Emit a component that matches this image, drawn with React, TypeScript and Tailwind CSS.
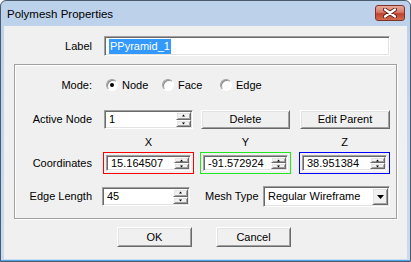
const sunken =
  "border border-t-[#a0a0a0] border-l-[#a0a0a0] border-r-white border-b-white shadow-[inset_1px_1px_0_#696969,inset_-1px_-1px_0_#e3e3e3] bg-white";
const raised =
  "border border-t-white border-l-white border-r-[#696969] border-b-[#696969] shadow-[inset_1px_1px_0_#e3e3e3,inset_-1px_-1px_0_#a0a0a0] bg-[#f0f0f0]";

function Arrow({ up }: { up?: boolean }) {
  return (
    <svg width="5" height="3" viewBox="0 0 5 3">
      <polygon points={up ? "2.5,0.5 4,2.5 1,2.5" : "1,0.5 4,0.5 2.5,2.5"} fill="#000" />
    </svg>
  );
}

function SpinBox({ value, className }: { value: string; className: string }) {
  return (
    <div className={`flex items-center ${sunken} ${className}`}>
      <span className="flex-1 pl-[4px] leading-none">{value}</span>
      <div className="flex flex-col self-stretch py-[1px] pr-[1px]">
        <div className={`flex-1 w-[15px] flex items-center justify-center ${raised}`}>
          <Arrow up />
        </div>
        <div className={`flex-1 w-[15px] flex items-center justify-center ${raised}`}>
          <Arrow />
        </div>
      </div>
    </div>
  );
}

function Radio({ checked, label, className }: { checked?: boolean; label: string; className: string }) {
  return (
    <div className={`flex items-center ${className}`}>
      <div className="w-[12px] h-[12px] rounded-full border border-t-[#a0a0a0] border-l-[#a0a0a0] border-r-white border-b-white bg-white flex items-center justify-center shadow-[inset_1px_1px_0_#8a8a8a]">
        {checked && <div className="w-[4px] h-[4px] rounded-full bg-black" />}
      </div>
      <span className="ml-[4px]">{label}</span>
    </div>
  );
}

function Button({ label, className }: { label: string; className: string }) {
  return (
    <div className={`flex items-center justify-center ${raised} ${className}`}>
      {label}
    </div>
  );
}

function CoordBox({ value, color }: { value: string; color: string }) {
  return (
    <div className={`w-[91px] h-[22px] border p-[2px] ${color}`}>
      <SpinBox value={value} className="w-full h-full" />
    </div>
  );
}

export default function App() {
  return (
    <div className="w-[411px] h-[262px] flex flex-col border border-[#4b5b6e] rounded-t-[6px] bg-[linear-gradient(to_bottom,#bcd1ea,#c8dbf0)] shadow-[inset_0_-1px_0_#4fa8e6] font-['Liberation_Sans',Arial,sans-serif] text-[11px] text-black overflow-hidden">
      {/* title bar */}
      <div className="h-[25px] flex justify-between">
        <div className="pl-[6px] pt-[6px] text-[11.5px] leading-[14px]">Polymesh Properties</div>
        <div className="mt-[4px] mr-[5px] w-[30px] h-[16px] rounded-[3px] border border-[#7d3328] bg-[linear-gradient(to_bottom,#e9a999,#d8796a_45%,#c2412f_55%,#cf6a4e)] flex items-center justify-center">
          <svg width="14" height="10" viewBox="0 0 14 10">
            <path d="M2 1.5 L12 8.5 M12 1.5 L2 8.5" stroke="#5b1e16" strokeWidth="4" strokeLinecap="round" />
            <path d="M2 1.5 L12 8.5 M12 1.5 L2 8.5" stroke="#ffffff" strokeWidth="2.2" strokeLinecap="round" />
          </svg>
        </div>
      </div>

      {/* client area */}
      <div className="flex-1 mx-[3px] mb-[2px] bg-[#f0f0f0] flex flex-col">
        <div className="mt-[10px] flex items-center h-[20px]">
          <div className="w-[88px] text-right">Label</div>
          <div className={`ml-[12px] w-[286px] h-[20px] flex items-center pl-[4px] ${sunken}`}>
            <span className="bg-[#3399ff] text-white px-[1px] leading-[15px]">PPyramid_1</span>
          </div>
        </div>

        <div className="mt-[8px] ml-[10px] w-[383px] h-[155px] border border-[#a0a0a0] shadow-[1px_1px_0_#ffffff,inset_1px_1px_0_#ffffff] flex flex-col">
          <div className="mt-[12px] h-[16px] flex items-center">
            <div className="w-[77px] text-right">Mode:</div>
            <Radio checked label="Node" className="ml-[14px] w-[56px]" />
            <Radio label="Face" className="w-[58px]" />
            <Radio label="Edge" className="w-[60px]" />
          </div>

          <div className="mt-[17px] h-[19px] flex items-center">
            <div className="w-[77px] text-right">Active Node</div>
            <SpinBox value="1" className="ml-[12px] w-[89px] h-[19px]" />
            <Button label="Delete" className="ml-[8px] w-[89px] h-[19px]" />
            <Button label="Edit Parent" className="ml-[10px] w-[90px] h-[19px]" />
          </div>

          <div className="mt-[7px] h-[13px] flex items-center">
            <div className="w-[88px]" />
            <div className="w-[91px] text-center">X</div>
            <div className="ml-[6px] w-[91px] text-center">Y</div>
            <div className="ml-[8px] w-[91px] text-center">Z</div>
          </div>

          <div className="mt-[3px] h-[22px] flex items-center">
            <div className="w-[77px] text-right">Coordinates</div>
            <div className="ml-[11px]">
              <CoordBox value="15.164507" color="border-[#ff0000]" />
            </div>
            <div className="ml-[6px]">
              <CoordBox value="-91.572924" color="border-[#22e622]" />
            </div>
            <div className="ml-[8px]">
              <CoordBox value="38.951384" color="border-[#0000ff]" />
            </div>
          </div>

          <div className="mt-[12px] h-[21px] flex items-center">
            <div className="w-[77px] text-right">Edge Length</div>
            <SpinBox value="45" className="ml-[10px] w-[88px] h-[19px]" />
            <div className="ml-[15px] w-[58px]">Mesh Type</div>
            <div className={`w-[127px] h-[21px] flex items-center ${sunken}`}>
              <span className="flex-1 pl-[4px]">Regular Wireframe</span>
              <div className="self-stretch flex py-[1px] pr-[1px]">
                <div className={`w-[16px] flex items-center justify-center ${raised}`}>
                  <svg width="7" height="4" viewBox="0 0 7 4">
                    <polygon points="0,0 7,0 3.5,4" fill="#000" />
                  </svg>
                </div>
              </div>
            </div>
          </div>
        </div>

        <div className="mt-[8px] flex">
          <Button label="OK" className="ml-[113px] w-[75px] h-[20px]" />
          <Button label="Cancel" className="ml-[24px] w-[75px] h-[20px]" />
        </div>
      </div>
    </div>
  );
}
